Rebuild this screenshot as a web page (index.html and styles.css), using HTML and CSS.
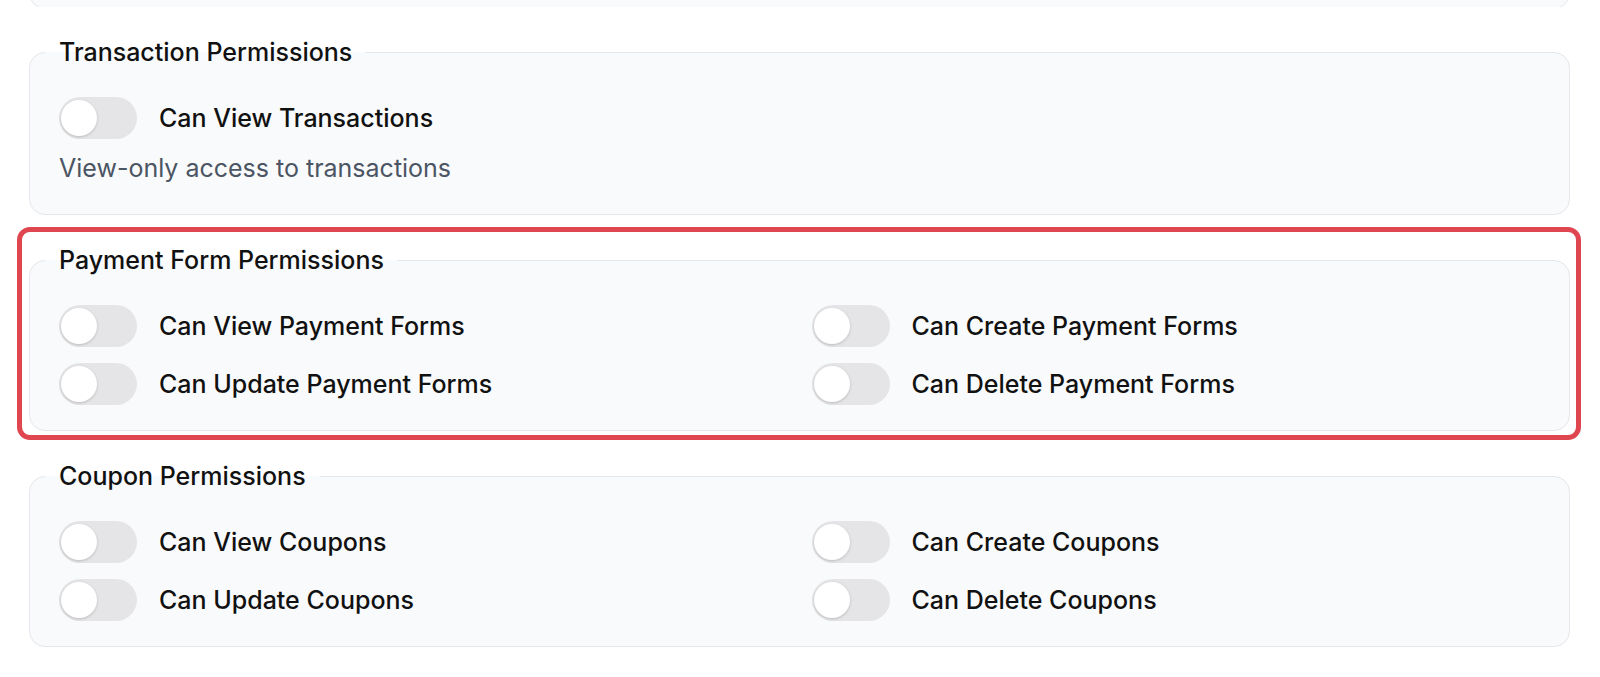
FILE: index.html
```html
<!DOCTYPE html>
<html lang="en">
<head>
    <meta charset="UTF-8">
    <meta name="viewport" content="width=device-width, initial-scale=1.0">
    <title>Role Permissions</title>
    <link rel="stylesheet" href="styles.css">
</head>
<body>
    <div class="container">
        <!-- tail of the section above, scrolled out of view -->
        <div class="section-tail">
            <div class="section-tail-box"></div>
        </div>

        <fieldset class="perm-group">
            <legend>Transaction Permissions</legend>
            <label class="perm">
                <span class="switch"><input type="checkbox"><span class="knob"></span></span>
                <span class="perm-label">Can View Transactions</span>
            </label>
            <p class="perm-hint">View-only access to transactions</p>
        </fieldset>

        <div class="highlight">
            <fieldset class="perm-group">
                <legend>Payment Form Permissions</legend>
                <div class="perm-grid">
                    <label class="perm">
                        <span class="switch"><input type="checkbox"><span class="knob"></span></span>
                        <span class="perm-label">Can View Payment Forms</span>
                    </label>
                    <label class="perm">
                        <span class="switch"><input type="checkbox"><span class="knob"></span></span>
                        <span class="perm-label">Can Create Payment Forms</span>
                    </label>
                    <label class="perm">
                        <span class="switch"><input type="checkbox"><span class="knob"></span></span>
                        <span class="perm-label">Can Update Payment Forms</span>
                    </label>
                    <label class="perm">
                        <span class="switch"><input type="checkbox"><span class="knob"></span></span>
                        <span class="perm-label">Can Delete Payment Forms</span>
                    </label>
                </div>
            </fieldset>
        </div>

        <fieldset class="perm-group">
            <legend>Coupon Permissions</legend>
            <div class="perm-grid">
                <label class="perm">
                    <span class="switch"><input type="checkbox"><span class="knob"></span></span>
                    <span class="perm-label">Can View Coupons</span>
                </label>
                <label class="perm">
                    <span class="switch"><input type="checkbox"><span class="knob"></span></span>
                    <span class="perm-label">Can Create Coupons</span>
                </label>
                <label class="perm">
                    <span class="switch"><input type="checkbox"><span class="knob"></span></span>
                    <span class="perm-label">Can Update Coupons</span>
                </label>
                <label class="perm">
                    <span class="switch"><input type="checkbox"><span class="knob"></span></span>
                    <span class="perm-label">Can Delete Coupons</span>
                </label>
            </div>
        </fieldset>
    </div>
</body>
</html>
```

FILE: styles.css
```css
body {
    font-family: Inter, "Noto Sans", sans-serif;
    margin: 0;
    background: #fff;
    color: #111827;
}
.container {
    padding: 0 29px 0 29px;
    width: 1541px;
}
.section-tail {
    height: 7px;
    overflow: hidden;
    margin-bottom: 30px;
}
.section-tail-box {
    height: 40px;
    margin-top: -33px;
    border: 1px solid #e5e7eb;
    border-radius: 16px;
    background: #f9fafb;
}
.perm-group {
    margin: 0 0 30px 0;
    padding: 30px 29px 25px 29px;
    border: 1px solid #e5e7eb;
    border-radius: 16px;
    background: #f9fafb;
    min-width: 0;
}
.perm-group legend {
    margin-left: -14px;
    padding: 0 14px;
    font-size: 25px;
    line-height: 30px;
    font-weight: 500;
    color: #111;
}
.perm-grid {
    display: grid;
    grid-template-columns: 1fr 1fr;
    column-gap: 24px;
    row-gap: 16px;
}
.perm {
    display: flex;
    align-items: center;
    gap: 22px;
    cursor: pointer;
}
.switch {
    position: relative;
    width: 78px;
    height: 42px;
    border-radius: 21px;
    background: #e5e5e7;
    flex: none;
}
.switch input {
    display: none;
}
.knob {
    position: absolute;
    top: 3px;
    left: 2px;
    width: 36px;
    height: 36px;
    border-radius: 50%;
    background: #fff;
    box-shadow: 0 1px 3px rgba(0,0,0,0.18);
}
.perm-label {
    font-size: 25px;
    font-weight: 500;
    line-height: 42px;
    color: #111;
}
.perm-hint {
    margin: 11px 0 0 0;
    font-size: 25px;
    line-height: 36px;
    color: #4b5563;
}
.perm-group:has(.perm-hint) {
    padding-bottom: 28px;
}
.highlight {
    position: relative;
}
.highlight::after {
    content: "";
    position: absolute;
    top: -18px;
    left: -12px;
    right: -11px;
    bottom: -9px;
    border: 5px solid #e0464f;
    border-radius: 13px;
    pointer-events: none;
}
```
